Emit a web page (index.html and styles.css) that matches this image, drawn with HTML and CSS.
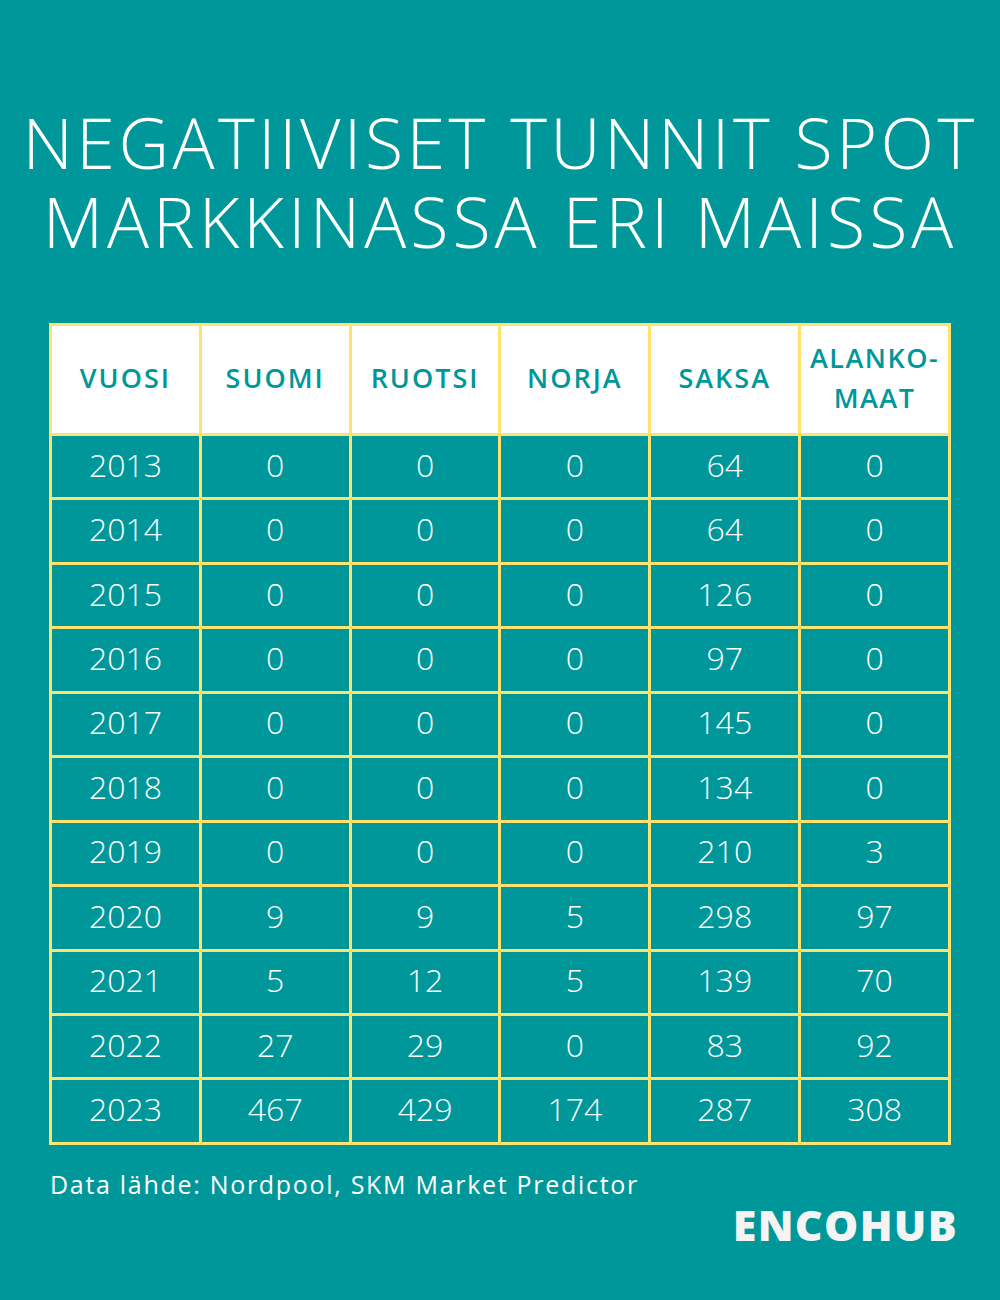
FILE: index.html
```html
<!DOCTYPE html>
<html lang="fi">
<head>
<meta charset="utf-8">
<title>Negatiiviset tunnit spot markkinassa eri maissa</title>
<link rel="stylesheet" href="styles.css">
</head>
<body>
<main class="page">
  <h1 class="title"><span class="line">NEGATIIVISET TUNNIT SPOT</span><span class="line">MARKKINASSA ERI MAISSA</span></h1>
  <div class="grid">
    <div class="head">VUOSI</div>
    <div class="head">SUOMI</div>
    <div class="head">RUOTSI</div>
    <div class="head">NORJA</div>
    <div class="head">SAKSA</div>
    <div class="head two">ALANKO-<br>MAAT</div>

    <div class="cell">2013</div><div class="cell">0</div><div class="cell">0</div><div class="cell">0</div><div class="cell">64</div><div class="cell">0</div>
    <div class="cell">2014</div><div class="cell">0</div><div class="cell">0</div><div class="cell">0</div><div class="cell">64</div><div class="cell">0</div>
    <div class="cell">2015</div><div class="cell">0</div><div class="cell">0</div><div class="cell">0</div><div class="cell">126</div><div class="cell">0</div>
    <div class="cell">2016</div><div class="cell">0</div><div class="cell">0</div><div class="cell">0</div><div class="cell">97</div><div class="cell">0</div>
    <div class="cell">2017</div><div class="cell">0</div><div class="cell">0</div><div class="cell">0</div><div class="cell">145</div><div class="cell">0</div>
    <div class="cell">2018</div><div class="cell">0</div><div class="cell">0</div><div class="cell">0</div><div class="cell">134</div><div class="cell">0</div>
    <div class="cell">2019</div><div class="cell">0</div><div class="cell">0</div><div class="cell">0</div><div class="cell">210</div><div class="cell">3</div>
    <div class="cell">2020</div><div class="cell">9</div><div class="cell">9</div><div class="cell">5</div><div class="cell">298</div><div class="cell">97</div>
    <div class="cell">2021</div><div class="cell">5</div><div class="cell">12</div><div class="cell">5</div><div class="cell">139</div><div class="cell">70</div>
    <div class="cell">2022</div><div class="cell">27</div><div class="cell">29</div><div class="cell">0</div><div class="cell">83</div><div class="cell">92</div>
    <div class="cell">2023</div><div class="cell">467</div><div class="cell">429</div><div class="cell">174</div><div class="cell">287</div><div class="cell">308</div>
  </div>
  <p class="source">Data lähde: Nordpool, SKM Market Predictor</p>
  <div class="logo">ENCOHUB</div>
</main>
</body>
</html>
```
FILE: styles.css
```css
html, body {
  margin: 0;
  padding: 0;
  background: #00979a;
}
body {
  width: 1000px;
  height: 1300px;
  overflow: hidden;
  font-family: "Open Sans", "Liberation Sans", sans-serif;
  color: #ffffff;
}
.page {
  padding-top: 103px;
  display: flex;
  flex-direction: column;
}
.title {
  margin: 0 0 62px 0;
  font-weight: 300;
  font-size: 70px;
  line-height: 79px;
  text-align: center;
  color: #ffffff;
  height: 158px;
  display: flex;
  flex-direction: column;
  align-items: center;
}
.line {
  display: block;
  height: 79px;
  white-space: nowrap;
  letter-spacing: 3.4px;
}
.line + .line {
  letter-spacing: 4px;
}
.grid {
  margin: 0 49px;
  display: grid;
  grid-template-columns: repeat(6, 1fr);
  grid-template-rows: 107px repeat(11, 61.45px);
  gap: 3px;
  padding: 3px;
  background: #ffe36e;
}
.head {
  background: #ffffff;
  color: #00979a;
  font-weight: 600;
  font-size: 27px;
  letter-spacing: 2px;
  line-height: 40px;
  display: flex;
  align-items: center;
  justify-content: center;
  text-align: center;
  padding-bottom: 3px;
}
.head.two {
  letter-spacing: 1.5px;
  white-space: nowrap;
}
.cell {
  background: #00979a;
  color: #ffffff;
  font-weight: 300;
  font-size: 32px;
  display: flex;
  align-items: center;
  justify-content: center;
  padding-bottom: 5px;
}
.source {
  margin: 22px 0 0 50px;
  font-size: 25px;
  line-height: 34px;
  letter-spacing: 1.7px;
  font-weight: 400;
}
.logo {
  margin-top: 2px;
  align-self: flex-end;
  margin-right: 42px;
  font-size: 43px;
  line-height: 43px;
  font-weight: 800;
  color: #f4f4f4;
  letter-spacing: 1.3px;
}
```
